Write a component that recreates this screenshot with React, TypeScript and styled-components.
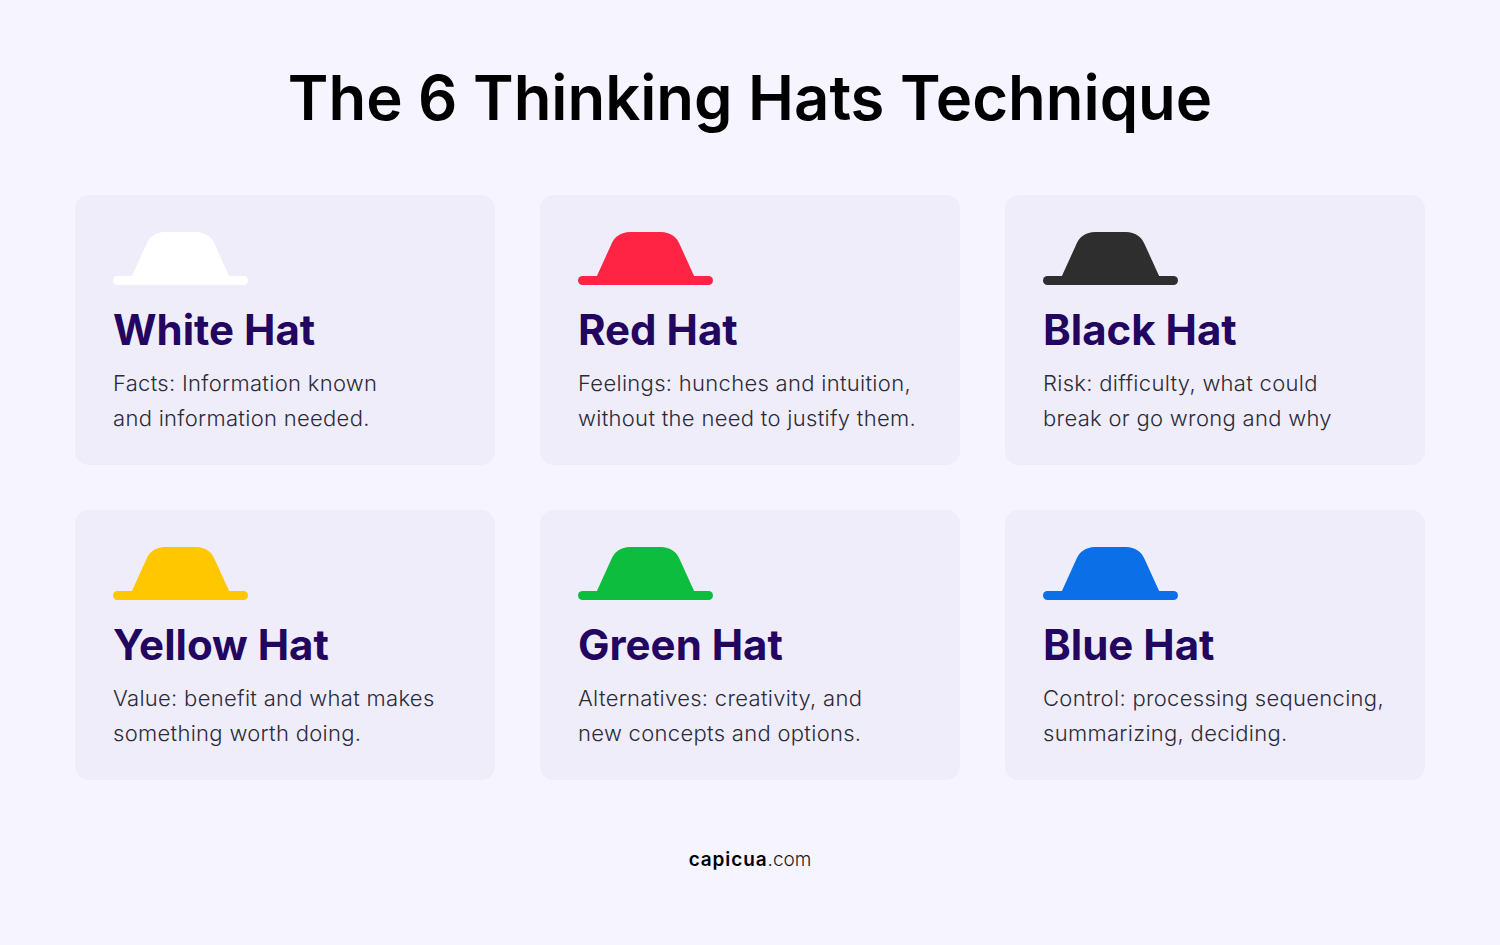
import React from "react";
import styled, { createGlobalStyle } from "styled-components";

const hats = [
  { name: "White Hat", color: "#ffffff", lines: ["Facts: Information known", "and information needed."] },
  { name: "Red Hat", color: "#ff2344", lines: ["Feelings: hunches and intuition,", "without the need to justify them."] },
  { name: "Black Hat", color: "#2e2e2e", lines: ["Risk: difficulty, what could", "break or go wrong and why"] },
  { name: "Yellow Hat", color: "#ffc700", lines: ["Value: benefit and what makes", "something worth doing."] },
  { name: "Green Hat", color: "#0dbd3e", lines: ["Alternatives: creativity, and", "new concepts and options."] },
  { name: "Blue Hat", color: "#0b6fe8", lines: ["Control: processing sequencing,", "summarizing, deciding."] },
];

const HatIcon: React.FC<{ color: string }> = ({ color }) => (
  <HatSvg viewBox="0 0 135 53" fill={color}>
    <rect x="0" y="44" width="135" height="9" rx="4.5" />
    <path d="M18 46 L33 13 C36 5 43 0 52 0 L83 0 C92 0 99 5 102 13 L117 46 Z" />
  </HatSvg>
);

const App: React.FC = () => (
  <>
    <GlobalStyle />
    <Page>
      <Title>The 6 Thinking Hats Technique</Title>
      <Grid>
        {hats.map(hat => (
          <Card key={hat.name}>
            <HatIcon color={hat.color} />
            <CardTitle>{hat.name}</CardTitle>
            <Description>
              {hat.lines[0]}
              <br />
              {hat.lines[1]}
            </Description>
          </Card>
        ))}
      </Grid>
      <Footer>
        <Brand>capicua</Brand>.com
      </Footer>
    </Page>
  </>
);

export default App;

const GlobalStyle = createGlobalStyle`
  html, body {
    margin: 0;
    padding: 0;
    background: #f6f4ff;
  }
`;

const Page = styled.div`
  width: 1500px;
  height: 945px;
  box-sizing: border-box;
  padding: 60px 75px 0;
  display: flex;
  flex-direction: column;
  align-items: center;
  background: #f6f4ff;
  font-family: Inter, "Liberation Sans", sans-serif;
`;

const Title = styled.h1`
  margin: 0 0 60px;
  height: 75px;
  font-size: 61.6px;
  line-height: 75px;
  font-weight: 600;
  color: #000;
  white-space: nowrap;
`;

const Grid = styled.div`
  display: grid;
  grid-template-columns: repeat(3, 420px);
  grid-auto-rows: 270px;
  gap: 45px;
`;

const Card = styled.div`
  box-sizing: border-box;
  padding: 37px 38px 0;
  border-radius: 14px;
  background: #f0edfb;
`;

const HatSvg = styled.svg`
  display: block;
  width: 135px;
  height: 53px;
`;

const CardTitle = styled.h2`
  margin: 20px 0 11px;
  font-size: 42px;
  line-height: 50px;
  font-weight: 700;
  color: #22065f;
  white-space: nowrap;
`;

const Description = styled.p`
  margin: 0;
  font-size: 22px;
  line-height: 34.5px;
  font-weight: 300;
  letter-spacing: 0.3px;
  color: #2b2b38;
  white-space: nowrap;
`;

const Footer = styled.div`
  margin-top: 68px;
  font-size: 19px;
  line-height: 24px;
  font-weight: 300;
  color: #1c1c1c;
`;

const Brand = styled.span`
  font-weight: 600;
  letter-spacing: 0.9px;
  color: #000;
`;
